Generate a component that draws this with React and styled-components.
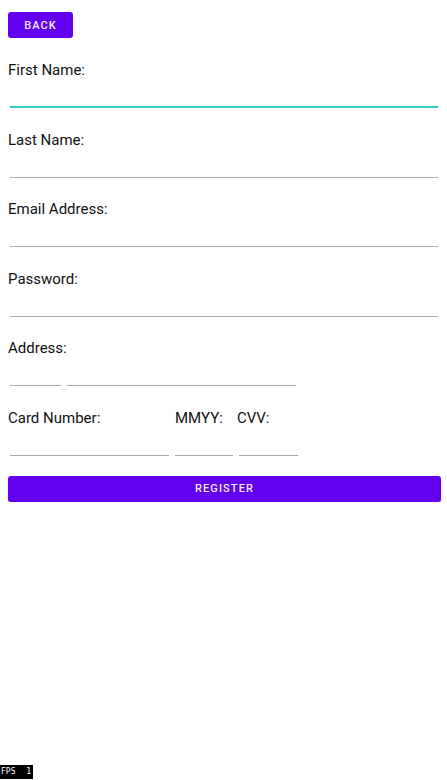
import React from 'react'
import styled, { createGlobalStyle } from 'styled-components'

const Global = createGlobalStyle`
  body {
    margin: 0;
    background: #fff;
    font-family: Roboto, "Noto Sans", sans-serif;
  }
`

const Page = styled.div`
  padding: 12px 6px 0 8px;
  display: flex;
  flex-direction: column;
  align-items: flex-start;
`

const Button = styled.button`
  background: #6200ee;
  color: #f4eaff;
  border: none;
  border-radius: 3px;
  height: 26px;
  width: ${p => p.$full ? '100%' : '65px'};
  font-family: Roboto, sans-serif;
  font-weight: 500;
  font-size: 11px;
  letter-spacing: 1.1px;
  text-transform: uppercase;
  padding: 0;
  box-shadow: ${p => p.$full ? '0 2px 2px rgba(0,0,0,0.22)' : 'none'};
  margin-top: ${p => p.$full ? '20px' : '0'};
`

const Field = styled.div`
  display: flex;
  flex-direction: column;
  width: 100%;
  margin-top: ${p => p.$first ? '21px' : '20.6px'};
`

const Label = styled.div`
  font-size: 15px;
  line-height: 20px;
  height: 21px;
  padding-top: 1px;
  box-sizing: border-box;
  color: #111;
`

const Line = styled.div`
  flex: none;
  height: 28px;
  box-sizing: border-box;
  border-bottom: ${p => p.$focused ? '2px solid #2bd3c6' : '1px solid #a8a8a8'};
  margin-left: 2px;
  margin-right: ${p => p.$right ?? 0}px;
  width: ${p => p.$w ? p.$w + 'px' : 'auto'};
`

const Row = styled.div`
  display: flex;
  gap: ${p => p.$gap ?? 4}px;
`

const LabelRow = styled.div`
  display: flex;
  font-size: 15px;
  line-height: 20px;
  height: 21px;
  padding-top: 1px;
  box-sizing: border-box;
  color: #111;
`

const Cell = styled.span`
  width: ${p => p.$w}px;
  flex: none;
`

const Fps = styled.div`
  position: fixed;
  left: 0;
  bottom: 1px;
  background: #000;
  color: #fff;
  font-family: "DejaVu Sans Mono", monospace;
  font-size: 8px;
  line-height: 14px;
  width: 33px;
  height: 14px;
  padding: 0 2px 0 1px;
  box-sizing: border-box;
  display: flex;
  justify-content: space-between;
`

const fields = [
  { label: 'First Name:', focused: true },
  { label: 'Last Name:' },
  { label: 'Email Address:' },
  { label: 'Password:' },
]

export default function App() {
  return (
    <>
      <Global />
      <Page>
        <Button>Back</Button>
        {fields.map((f, i) => (
          <Field key={f.label} $first={i === 0}>
            <Label>{f.label}</Label>
            <Line $focused={f.focused} $right={3} />
          </Field>
        ))}
        <Field>
          <Label>Address:</Label>
          <Row $gap={4}>
            <Line $w={51} />
            <Line $w={229} />
          </Row>
        </Field>
        <Field>
          <LabelRow>
            <Cell $w={167}>Card Number:</Cell>
            <Cell $w={62}>MMYY:</Cell>
            <Cell $w={60}>CVV:</Cell>
          </LabelRow>
          <Row $gap={4}>
            <Line $w={159} />
            <Line $w={58} />
            <Line $w={59} />
          </Row>
        </Field>
        <Button $full>Register</Button>
      </Page>
      <Fps><span>FPS</span><span>1</span></Fps>
    </>
  )
}
